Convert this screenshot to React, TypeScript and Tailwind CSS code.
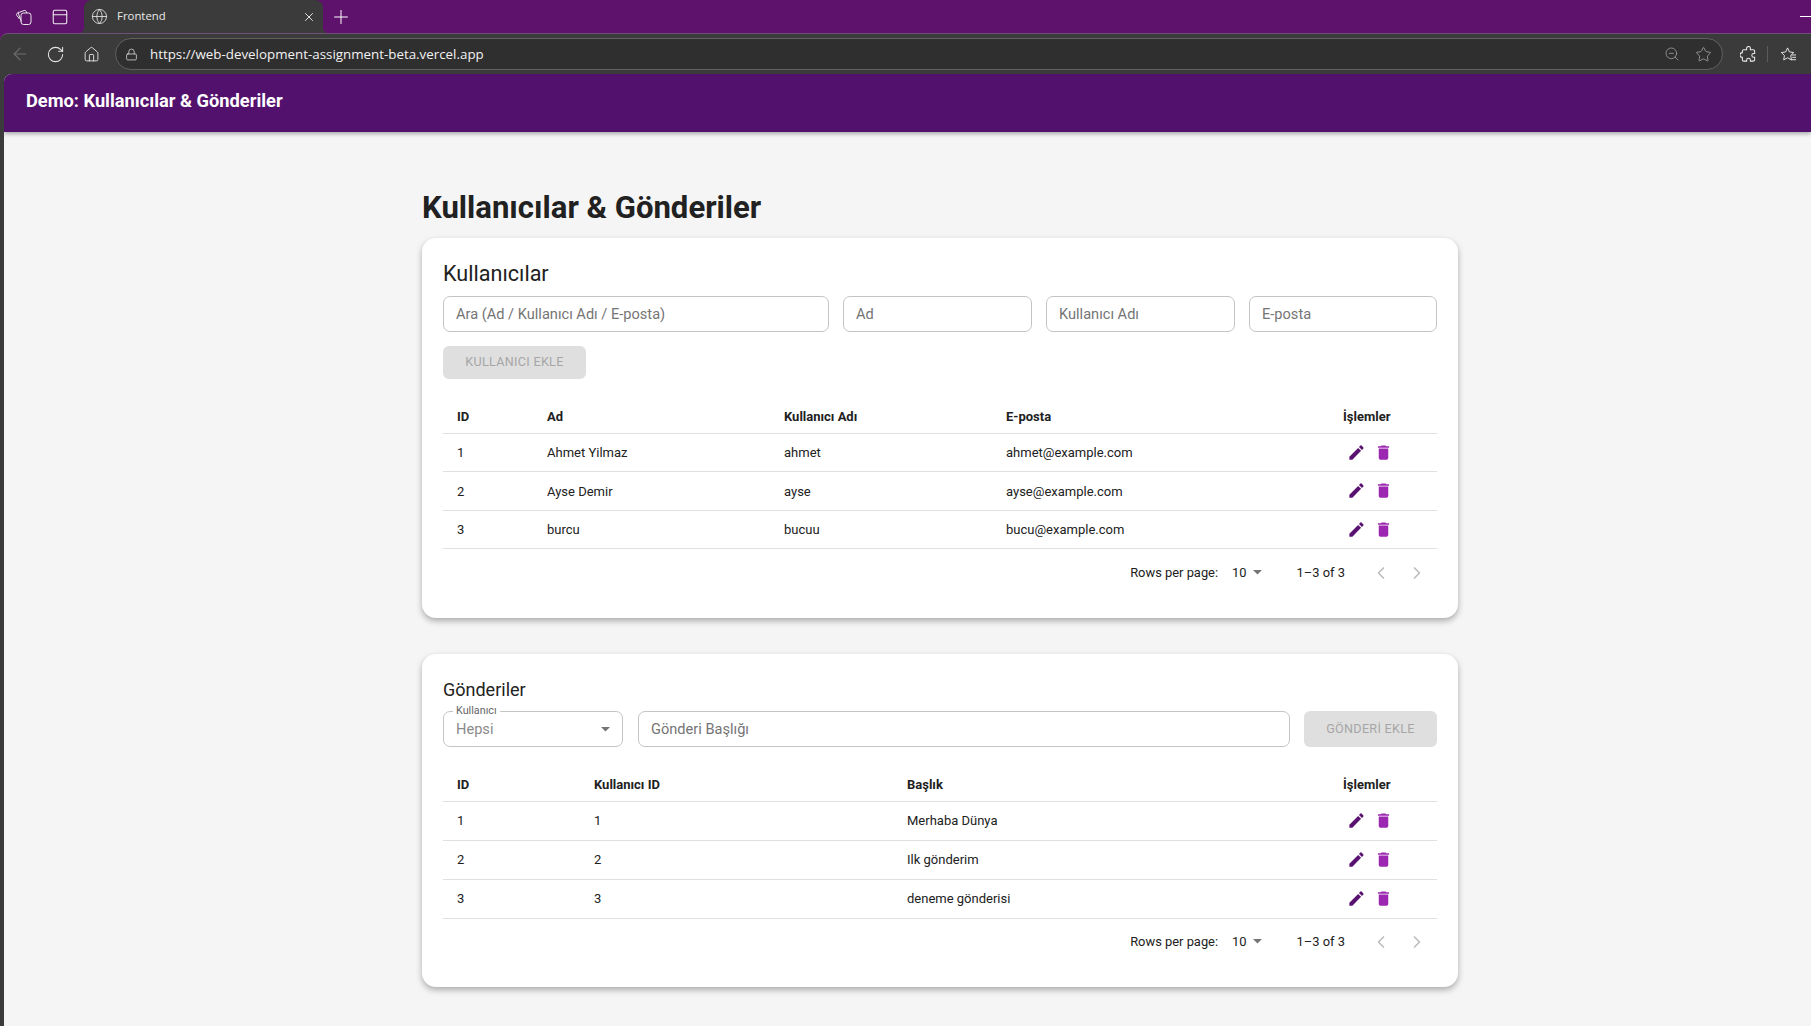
import { ArrowLeft, ChevronLeft, ChevronRight, Globe, House, Lock, PanelTop, Plus, RotateCw, Star, X, ZoomOut } from "lucide-react"

interface Column {
  title: string
  width: string
}

const userColumns: Column[] = [
  { title: "ID", width: "w-[90px]" },
  { title: "Ad", width: "w-[237px]" },
  { title: "Kullanıcı Adı", width: "w-[222px]" },
  { title: "E-posta", width: "w-[337px]" },
  { title: "İşlemler", width: "w-[108px]" },
]

const postColumns: Column[] = [
  { title: "ID", width: "w-[137px]" },
  { title: "Kullanıcı ID", width: "w-[313px]" },
  { title: "Başlık", width: "w-[436px]" },
  { title: "İşlemler", width: "w-[108px]" },
]

const users = [
  ["1", "Ahmet Yilmaz", "ahmet", "ahmet@example.com"],
  ["2", "Ayse Demir", "ayse", "ayse@example.com"],
  ["3", "burcu", "bucuu", "bucu@example.com"],
]

const posts = [
  ["1", "1", "Merhaba Dünya"],
  ["2", "2", "Ilk gönderim"],
  ["3", "3", "deneme gönderisi"],
]

function EditIcon() {
  return (
    <svg viewBox="0 0 24 24" className="w-[19px] h-[19px] fill-[#5a1270]">
      <path d="M3 17.25V21h3.75L17.81 9.94l-3.75-3.75L3 17.25zM20.71 7.04c.39-.39.39-1.02 0-1.41l-2.34-2.34c-.39-.39-1.02-.39-1.41 0l-1.83 1.83 3.75 3.75 1.83-1.83z" />
    </svg>
  )
}

function DeleteIcon() {
  return (
    <svg viewBox="0 0 24 24" className="w-[19px] h-[19px] fill-[#9c27b0]">
      <path d="M6 19c0 1.1.9 2 2 2h8c1.1 0 2-.9 2-2V7H6v12zM19 4h-3.5l-1-1h-5l-1 1H5v2h14V4z" />
    </svg>
  )
}

function Caret({ className }: { className: string }) {
  return (
    <svg viewBox="0 0 10 5" className={className}>
      <path d="M0 0l5 5 5-5z" />
    </svg>
  )
}

function DataTable({ columns, rows, rowHeight }: { columns: Column[]; rows: string[][]; rowHeight: string }) {
  return (
    <table className="w-[994px] table-fixed border-collapse text-[13px] text-[#212121]">
      <colgroup>
        {columns.map((column) => (
          <col key={column.title} className={column.width} />
        ))}
      </colgroup>
      <thead>
        <tr className="h-[36px] border-b border-[#e0e0e0]">
          {columns.map((column) => (
            <th key={column.title} className="pl-[14px] pt-[4px] text-left font-bold">
              {column.title}
            </th>
          ))}
        </tr>
      </thead>
      <tbody>
        {rows.map((row) => (
          <tr key={row[0]} className={`${rowHeight} border-b border-[#e0e0e0]`}>
            {row.map((cell, i) => (
              <td key={i} className="pl-[14px] pt-[1px]">
                {cell}
              </td>
            ))}
            <td className="pl-[18px]">
              <div className="flex items-center gap-[8px]">
                <EditIcon />
                <DeleteIcon />
              </div>
            </td>
          </tr>
        ))}
      </tbody>
    </table>
  )
}

function Pagination({ height }: { height: string }) {
  return (
    <div className={`flex items-center justify-end text-[12.9px] text-[#212121] ${height}`}>
      <span>Rows per page:</span>
      <span className="ml-[14px]">10</span>
      <Caret className="ml-[6px] w-[9px] h-[4.5px] fill-[#757575]" />
      <span className="ml-[35px]">1–3 of 3</span>
      <ChevronLeft className="ml-[26px] w-[20px] h-[20px] text-[#bdbdbd]" strokeWidth={2} />
      <ChevronRight className="ml-[16px] mr-[10px] w-[20px] h-[20px] text-[#bdbdbd]" strokeWidth={2} />
    </div>
  )
}

function TextField({ placeholder, className }: { placeholder: string; className: string }) {
  return (
    <input
      readOnly
      placeholder={placeholder}
      className={`h-[36px] rounded-[7px] border border-[#c4c4c4] bg-white px-[12px] text-[14.6px] outline-none placeholder:text-[#757575] ${className}`}
    />
  )
}

function DisabledButton({ label, className }: { label: string; className: string }) {
  return (
    <button className={`rounded-[6px] bg-[#dfdfdf] text-[12.6px] tracking-[0.3px] text-[#a6a6a6] ${className}`}>
      {label}
    </button>
  )
}

function BrowserChrome() {
  return (
    <div className="flex-none bg-[#5f126c] font-['Open_Sans',sans-serif]">
      {/* Tab strip */}
      <div className="h-[33px] flex items-end text-white">
        <svg viewBox="0 0 18 18" className="ml-[15px] mb-[7px] w-[18px] h-[18px] fill-none stroke-[#e8e8e8]">
          <rect x="6" y="5" width="10" height="11.5" rx="2.5" />
          <path d="M6.4 13.5 3.6 6.2a1.6 1.6 0 0 1 1-2l4.6-1.7a1.6 1.6 0 0 1 2 1L11.6 5" />
          <path d="M4.6 11 1.8 7.4a1.5 1.5 0 0 1 .3-2.1L4 4" />
        </svg>
        <PanelTop className="ml-[18px] mb-[7px] w-[18px] h-[18px] text-[#f0f0f0]" strokeWidth={1.4} />
        <div className="relative ml-[15px] w-[239px] h-[33px] flex items-center rounded-t-[8px] bg-[#3b3b3b]">
          <span className="absolute bottom-0 left-[-6px] w-[6px] h-[6px] bg-[radial-gradient(circle_at_0_0,transparent_6px,#3b3b3b_6.5px)]" />
          <span className="absolute bottom-0 right-[-6px] w-[6px] h-[6px] bg-[radial-gradient(circle_at_100%_0,transparent_6px,#3b3b3b_6.5px)]" />
          <Globe className="ml-[7px] w-[17px] h-[17px] text-[#e6e6e6]" strokeWidth={1.2} />
          <span className="ml-[9px] pb-[1px] flex-1 text-[11.4px] text-[#e8e8e8]">Frontend</span>
          <X className="mr-[7px] w-[14px] h-[14px] text-[#f0f0f0]" strokeWidth={1.6} />
        </div>
        <Plus className="ml-[7px] mb-[5px] w-[22px] h-[22px] text-white" strokeWidth={1.1} />
        <div className="ml-auto mb-[16px] w-[11px] h-px bg-white" />
      </div>

      {/* Toolbar */}
      <div className="h-[41px] flex items-center rounded-tl-[8px] border-t border-[#6f5078] bg-[#3b3b3b]">
        <ArrowLeft className="ml-[10px] w-[20px] h-[20px] text-[#6f6f6f]" strokeWidth={1.3} />
        <RotateCw className="ml-[16px] w-[19px] h-[19px] text-[#e6e6e6]" strokeWidth={1.3} />
        <House className="ml-[18px] w-[17px] h-[17px] text-[#e6e6e6]" strokeWidth={1.3} />
        <div className="ml-[15px] w-[1608px] h-[32px] flex items-center rounded-full border border-[#616161] bg-[#2f2f2f]">
          <Lock className="ml-[9px] w-[13px] h-[13px] text-[#dcdcdc]" strokeWidth={1.4} />
          <span className="ml-[12px] flex-1 text-[13.35px] text-[#f2f2f2]">https://web-development-assignment-beta.vercel.app</span>
          <ZoomOut className="mr-[15px] w-[16px] h-[16px] text-[#9a9a9a]" strokeWidth={1.3} />
          <Star className="mr-[10px] w-[17px] h-[17px] text-[#9a9a9a]" strokeWidth={1.3} />
        </div>
        <svg viewBox="0 0 18 18" className="ml-[17px] w-[17px] h-[17px] fill-none stroke-[#ececec]" strokeWidth={1.1}>
          <path d="M7 2.5a2 2 0 0 1 4 0V4h3a1.500 1.500 0 0 1 1.500 1.500V8h-1a2 2 0 0 0 0 4h1v2.500A1.500 1.500 0 0 1 14 16h-3v-1a2 2 0 0 0-4 0v1H4a1.500 1.500 0 0 1-1.500-1.500V12a2.500 2.500 0 0 1 0-5V5.500A1.500 1.500 0 0 1 4 4h3z" />
        </svg>
        <div className="ml-[10px] w-px h-[16px] bg-[#5c5c5c]" />
        <svg viewBox="0 0 18 18" className="ml-[12px] w-[17px] h-[17px] fill-none stroke-[#ececec]">
          <path d="M8 2l2 4.300 4.600.6-3.300 3.200.8 4.600L8 12.500l-4.100 2.200.8-4.600L1.400 6.900 6 6.300z" />
          <path d="M12 9.500h5M13 12h4M11.500 14.500h5.500" />
        </svg>
      </div>
    </div>
  )
}

export default function App() {
  return (
    <div className="flex flex-col h-screen overflow-hidden bg-[#3b3b3b] font-['Roboto',sans-serif]">
      <BrowserChrome />

      <div className="flex-1 ml-[4px] overflow-hidden rounded-tl-[8px] bg-[#f5f5f5]">
        {/* App bar */}
        <div className="h-[58px] flex items-center pl-[22px] pb-[4px] bg-[#52116d] shadow-[0_2px_4px_rgba(0,0,0,0.3)]">
          <h1 className="text-[18.25px] font-bold text-white">Demo: Kullanıcılar &amp; Gönderiler</h1>
        </div>

        <main className="ml-[418px] w-[1036px]">
          <h2 className="mt-[57px] h-[38px] flex items-center text-[31.1px] font-bold text-[#212121]">
            Kullanıcılar &amp; Gönderiler
          </h2>

          {/* Users card */}
          <section className="mt-[11px] h-[380px] rounded-[14px] bg-white px-[21px] pt-[22px] shadow-[0_3px_6px_rgba(0,0,0,0.3)]">
            <h3 className="h-[28px] flex items-center text-[21.6px] text-[#212121]">Kullanıcılar</h3>
            <div className="mt-[8px] flex gap-[14px]">
              <TextField placeholder="Ara (Ad / Kullanıcı Adı / E-posta)" className="w-[386px]" />
              <TextField placeholder="Ad" className="w-[189px]" />
              <TextField placeholder="Kullanıcı Adı" className="w-[189px]" />
              <TextField placeholder="E-posta" className="w-[188px]" />
            </div>
            <DisabledButton label="KULLANICI EKLE" className="mt-[14px] block w-[143px] h-[33px]" />
            <div className="mt-[18px]">
              <DataTable columns={userColumns} rows={users} rowHeight="h-[38.5px]" />
            </div>
            <Pagination height="h-[47px]" />
          </section>

          {/* Posts card */}
          <section className="mt-[36px] h-[333px] rounded-[14px] bg-white px-[21px] pt-[21px] shadow-[0_3px_6px_rgba(0,0,0,0.3)]">
            <h3 className="h-[28px] flex items-center text-[18px] text-[#212121]">Gönderiler</h3>
            <div className="mt-[8px] flex">
              <div className="relative w-[180px] h-[36px] flex items-center rounded-[7px] border border-[#c4c4c4] px-[12px] pt-[1px] text-[14.6px] text-[#8a8a8a]">
                <span className="absolute left-[9px] top-[-7px] bg-white px-[3px] text-[10.8px] leading-[12px] text-[#666666]">Kullanıcı</span>
                <span className="flex-1">Hepsi</span>
                <Caret className="w-[9px] h-[4.5px] fill-[#757575]" />
              </div>
              <TextField placeholder="Gönderi Başlığı" className="ml-[15px] w-[652px]" />
              <DisabledButton label="GÖNDERİ EKLE" className="ml-[14px] w-[133px] h-[36px]" />
            </div>
            <div className="mt-[18px]">
              <DataTable columns={postColumns} rows={posts} rowHeight="h-[39px]" />
            </div>
            <Pagination height="h-[46px]" />
          </section>
        </main>
      </div>
    </div>
  )
}
